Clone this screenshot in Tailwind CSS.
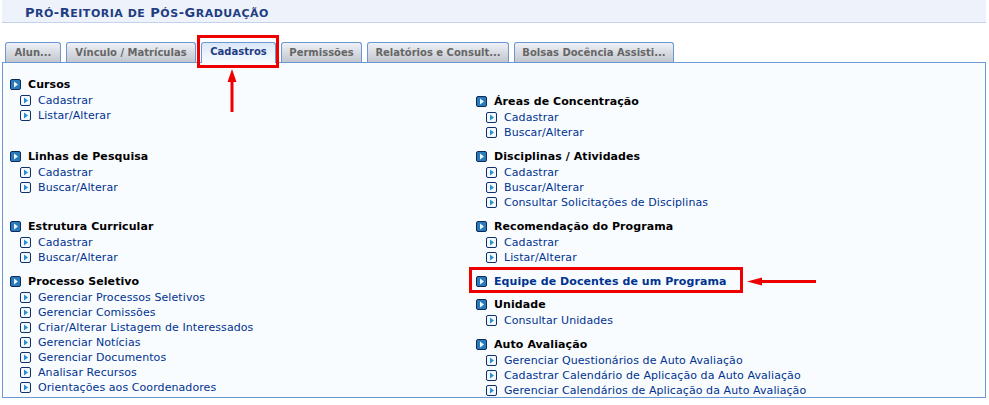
<!DOCTYPE html>
<html lang="en">
<head>
<meta charset="UTF-8" />
<title>Pró-Reitoria de Pós-Graduação</title>
<script src="https://cdn.jsdelivr.net/npm/@tailwindcss/browser@4"></script>
</head>
<body class="relative w-[989px] h-[405px] overflow-hidden bg-white font-['DejaVu_Sans',sans-serif] text-[11px]">
<svg width="0" height="0" class="absolute">
  <defs>
    <symbol id="big" viewBox="0 0 11 11">
      <rect x="0.5" y="0.5" width="10" height="10" rx="1.5" fill="#2a7ab8" stroke="#0f2a5a"/>
      <path d="M4 2.5 L8 5.5 L4 8.5 Z" fill="#e8f6ff"/>
    </symbol>
    <symbol id="small" viewBox="0 0 11 11">
      <rect x="0.5" y="0.5" width="10" height="10" rx="1.5" fill="#f4f9ff" stroke="#10306a"/>
      <path d="M4 2.5 L8 5.5 L4 8.5 Z" fill="#2a8fd0"/>
    </symbol>
  </defs>
</svg>

<div class="pl-[2px] pr-[3px]">
  <div class="h-[23px] bg-[#eef2fa] border-b border-[#c4d2eb] pl-[23px] pt-[5px] font-bold text-[13px] leading-[15px] text-[#1f3d82] tracking-[0.5px]">
    P<span class="text-[11px]">RÓ</span>-R<span class="text-[11px]">EITORIA DE</span> P<span class="text-[11px]">ÓS</span>-G<span class="text-[11px]">RADUAÇÃO</span>
  </div>

  <div class="mt-[19px] flex items-start gap-[5px] pl-[3px] h-[20px] relative z-10 font-bold text-[10px]">
    <div class="w-[56px] h-[20px] border border-b-0 border-[#6b97d2] rounded-t-[3px] bg-gradient-to-b from-[#eef1f6] to-[#c2c6cd] text-[#666] text-center leading-[20px]">Alun...</div>
    <div class="w-[130px] h-[20px] border border-b-0 border-[#6b97d2] rounded-t-[3px] bg-gradient-to-b from-[#eef1f6] to-[#c2c6cd] text-[#666] text-center leading-[20px]">Vínculo / Matrículas</div>
    <div class="w-[75px] h-[21px] border border-b-0 border-[#6b97d2] rounded-t-[3px] bg-gradient-to-b from-[#dbe8f8] to-[#f9fcff] text-[#1f3d82] text-center leading-[18px]">Cadastros</div>
    <div class="w-[81px] h-[20px] border border-b-0 border-[#6b97d2] rounded-t-[3px] bg-gradient-to-b from-[#eef1f6] to-[#c2c6cd] text-[#666] text-center leading-[20px]">Permissões</div>
    <div class="w-[142px] h-[20px] border border-b-0 border-[#6b97d2] rounded-t-[3px] bg-gradient-to-b from-[#eef1f6] to-[#c2c6cd] text-[#666] text-center leading-[20px]">Relatórios e Consult...</div>
    <div class="w-[160px] h-[20px] border border-b-0 border-[#6b97d2] rounded-t-[3px] bg-gradient-to-b from-[#eef1f6] to-[#c2c6cd] text-[#666] text-center leading-[20px]">Bolsas Docência Assisti...</div>
  </div>

  <div class="h-[336px] border border-[#6b97d2] bg-[#f9fcff] flex leading-[15px] text-[#003390] tracking-[0.08px]">
    <div class="w-[466px] pl-[7px]">
      <div class="mt-[13px]">
        <h3 class="flex items-center gap-[7px] font-bold text-black h-[16px]"><svg class="size-[11px]"><use href="#big"/></svg>Cursos</h3>
        <ul class="pl-[10px] pt-px">
          <li class="flex items-center gap-[7px]"><svg class="size-[11px]"><use href="#small"/></svg>Cadastrar</li>
          <li class="flex items-center gap-[7px]"><svg class="size-[11px]"><use href="#small"/></svg>Listar/Alterar</li>
        </ul>
      </div>
      <div class="mt-[25px]">
        <h3 class="flex items-center gap-[7px] font-bold text-black h-[16px]"><svg class="size-[11px]"><use href="#big"/></svg>Linhas de Pesquisa</h3>
        <ul class="pl-[10px] pt-px">
          <li class="flex items-center gap-[7px]"><svg class="size-[11px]"><use href="#small"/></svg>Cadastrar</li>
          <li class="flex items-center gap-[7px]"><svg class="size-[11px]"><use href="#small"/></svg>Buscar/Alterar</li>
        </ul>
      </div>
      <div class="mt-[23px]">
        <h3 class="flex items-center gap-[7px] font-bold text-black h-[16px]"><svg class="size-[11px]"><use href="#big"/></svg>Estrutura Curricular</h3>
        <ul class="pl-[10px] pt-px">
          <li class="flex items-center gap-[7px]"><svg class="size-[11px]"><use href="#small"/></svg>Cadastrar</li>
          <li class="flex items-center gap-[7px]"><svg class="size-[11px]"><use href="#small"/></svg>Buscar/Alterar</li>
        </ul>
      </div>
      <div class="mt-[8px]">
        <h3 class="flex items-center gap-[7px] font-bold text-black h-[16px]"><svg class="size-[11px]"><use href="#big"/></svg>Processo Seletivo</h3>
        <ul class="pl-[10px] pt-px">
          <li class="flex items-center gap-[7px]"><svg class="size-[11px]"><use href="#small"/></svg>Gerenciar Processos Seletivos</li>
          <li class="flex items-center gap-[7px]"><svg class="size-[11px]"><use href="#small"/></svg>Gerenciar Comissões</li>
          <li class="flex items-center gap-[7px]"><svg class="size-[11px]"><use href="#small"/></svg>Criar/Alterar Listagem de Interessados</li>
          <li class="flex items-center gap-[7px]"><svg class="size-[11px]"><use href="#small"/></svg>Gerenciar Notícias</li>
          <li class="flex items-center gap-[7px]"><svg class="size-[11px]"><use href="#small"/></svg>Gerenciar Documentos</li>
          <li class="flex items-center gap-[7px]"><svg class="size-[11px]"><use href="#small"/></svg>Analisar Recursos</li>
          <li class="flex items-center gap-[7px]"><svg class="size-[11px]"><use href="#small"/></svg>Orientações aos Coordenadores</li>
        </ul>
      </div>
    </div>

    <div class="flex-1 pl-[7px]">
      <div class="mt-[30px]">
        <h3 class="flex items-center gap-[7px] font-bold text-black h-[16px]"><svg class="size-[11px]"><use href="#big"/></svg>Áreas de Concentração</h3>
        <ul class="pl-[10px] pt-px">
          <li class="flex items-center gap-[7px]"><svg class="size-[11px]"><use href="#small"/></svg>Cadastrar</li>
          <li class="flex items-center gap-[7px]"><svg class="size-[11px]"><use href="#small"/></svg>Buscar/Alterar</li>
        </ul>
      </div>
      <div class="mt-[8px]">
        <h3 class="flex items-center gap-[7px] font-bold text-black h-[16px]"><svg class="size-[11px]"><use href="#big"/></svg>Disciplinas / Atividades</h3>
        <ul class="pl-[10px] pt-px">
          <li class="flex items-center gap-[7px]"><svg class="size-[11px]"><use href="#small"/></svg>Cadastrar</li>
          <li class="flex items-center gap-[7px]"><svg class="size-[11px]"><use href="#small"/></svg>Buscar/Alterar</li>
          <li class="flex items-center gap-[7px]"><svg class="size-[11px]"><use href="#small"/></svg>Consultar Solicitações de Disciplinas</li>
        </ul>
      </div>
      <div class="mt-[8px]">
        <h3 class="flex items-center gap-[7px] font-bold text-black h-[16px]"><svg class="size-[11px]"><use href="#big"/></svg>Recomendação do Programa</h3>
        <ul class="pl-[10px] pt-px">
          <li class="flex items-center gap-[7px]"><svg class="size-[11px]"><use href="#small"/></svg>Cadastrar</li>
          <li class="flex items-center gap-[7px]"><svg class="size-[11px]"><use href="#small"/></svg>Listar/Alterar</li>
        </ul>
      </div>
      <div class="mt-[8px]">
        <h3 class="flex items-center gap-[7px] font-bold text-[#003390] h-[16px]"><svg class="size-[11px]"><use href="#big"/></svg>Equipe de Docentes de um Programa</h3>
      </div>
      <div class="mt-[7px]">
        <h3 class="flex items-center gap-[7px] font-bold text-black h-[16px]"><svg class="size-[11px]"><use href="#big"/></svg>Unidade</h3>
        <ul class="pl-[10px] pt-px">
          <li class="flex items-center gap-[7px]"><svg class="size-[11px]"><use href="#small"/></svg>Consultar Unidades</li>
        </ul>
      </div>
      <div class="mt-[8px]">
        <h3 class="flex items-center gap-[7px] font-bold text-black h-[16px]"><svg class="size-[11px]"><use href="#big"/></svg>Auto Avaliação</h3>
        <ul class="pl-[10px] pt-px">
          <li class="flex items-center gap-[7px]"><svg class="size-[11px]"><use href="#small"/></svg>Gerenciar Questionários de Auto Avaliação</li>
          <li class="flex items-center gap-[7px]"><svg class="size-[11px]"><use href="#small"/></svg>Cadastrar Calendário de Aplicação da Auto Avaliação</li>
          <li class="flex items-center gap-[7px]"><svg class="size-[11px]"><use href="#small"/></svg>Gerenciar Calendários de Aplicação da Auto Avaliação</li>
        </ul>
      </div>
    </div>
  </div>
</div>

<!-- red annotations over the screenshot -->
<div class="absolute left-[197px] top-[35px] w-[82px] h-[33px] border-[3px] border-[#ee0000] z-20"></div>
<div class="absolute left-[469px] top-[267px] w-[274px] h-[26px] border-[3px] border-[#ee0000] z-20"></div>
<svg class="absolute left-[224px] top-[68px] z-20" width="16" height="46"><path d="M8 1 L12.5 14 L9.5 14 L9.5 44 L6.5 44 L6.5 14 L3.5 14 Z" fill="#ee0000"/></svg>
<svg class="absolute left-[745px] top-[274px] z-20" width="74" height="14"><path d="M2 7.5 L17 3.5 L17 6 L71 6 L71 9 L17 9 L17 11.5 Z" fill="#ee0000"/></svg>
</body>
</html>
